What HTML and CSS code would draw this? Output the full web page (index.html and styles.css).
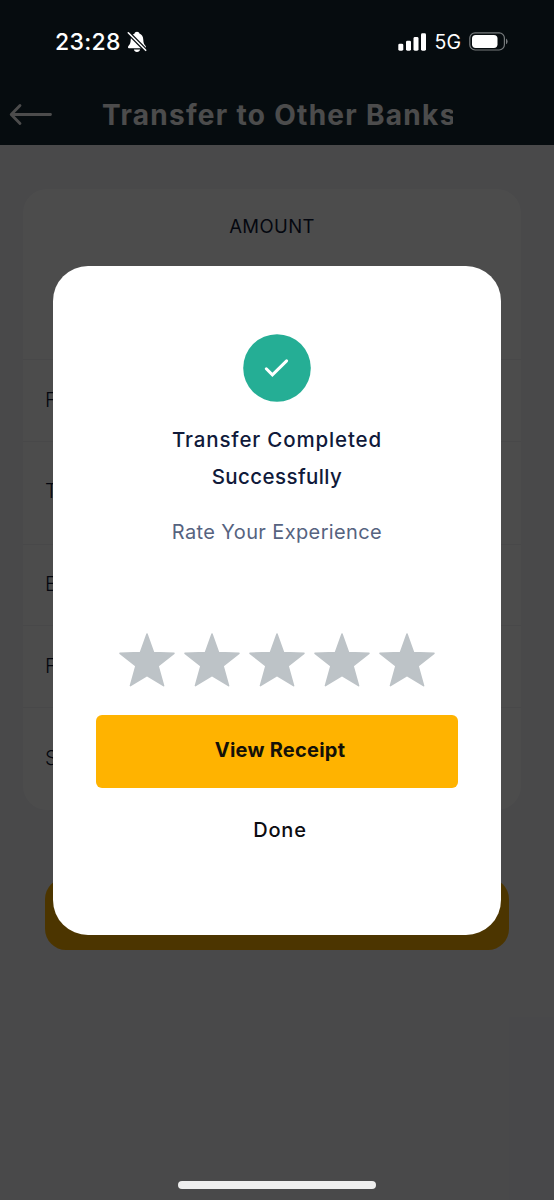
FILE: index.html
```html
<!DOCTYPE html>
<html lang="en">
<head>
<meta charset="utf-8">
<title>Transfer to Other Banks</title>
<link rel="stylesheet" href="styles.css">
</head>
<body>
<div class="screen">
  <header class="header">
    <svg class="back" width="44" height="24" viewBox="0 0 44 24"><path d="M11 2.500 2.200 11.500 11 20.500M2.500 11.500H41.500" fill="none" stroke="#fff" stroke-width="2.800" stroke-linecap="round" stroke-linejoin="round"/></svg>
    <h1 class="title">Transfer to Other Banks</h1>
  </header>
  <main class="content">
    <section class="card">
      <div class="amount">AMOUNT</div>
      <div class="row">F</div>
      <div class="row row-tall">T</div>
      <div class="row">B</div>
      <div class="row">F</div>
      <div class="row row-last">S</div>
    </section>
    <div class="continue"></div>
  </main>
</div>
<div class="overlay">
  <div class="status">
    <div class="status-left">
      <span class="time">23:28</span>
      <svg width="20" height="22" viewBox="0 0 20 22"><path d="M10 .8c1.400 0 2.200.8 2.400 1.800 2.500.9 3.800 3.200 3.900 6.200.1 3 .7 4.300 1.900 5.700.5.600.8 1 .8 1.700 0 .7-.5 1.100-1.300 1.100H2.300C1.500 17.300 1 16.900 1 16.200c0-.7.3-1.100.8-1.700C3 13.100 3.600 11.800 3.700 8.800c.1-3 1.400-5.300 3.900-6.200C7.800 1.600 8.600.8 10 .8ZM6.900 18.500h6.200c-.2 1.500-1.500 2.500-3.100 2.500s-2.900-1-3.100-2.500Z" fill="#fff"/><path d="M1 1.500 19 19.500" stroke="#070d10" stroke-width="4"/><path d="M1.300 1.800 18.700 19.300" stroke="#fff" stroke-width="1.600" stroke-linecap="round"/></svg>
    </div>
    <div class="status-right">
      <svg width="29" height="18" viewBox="0 0 29 18" fill="#fff"><rect x=".3" y="10.700" width="5" height="7" rx="1.400"/><rect x="8" y="7.700" width="5" height="10" rx="1.400"/><rect x="15.500" y="4" width="5" height="13.700" rx="1.400"/><rect x="23" y=".2" width="5" height="17.500" rx="1.400"/></svg>
      <span class="network">5G</span>
      <svg width="39" height="19" viewBox="0 0 39 19"><rect x=".8" y=".8" width="34.600" height="17.200" rx="5.300" fill="none" stroke="#777b7d" stroke-width="1.200"/><rect x="3" y="2.900" width="25.500" height="13" rx="3.700" fill="#fff"/><path d="M37 6.500q1.600 1 1.600 2.900T37 12.300Z" fill="#777b7d"/></svg>
    </div>
  </div>
  <section class="modal">
    <svg class="check" width="68" height="68" viewBox="0 0 68 68"><circle cx="34" cy="34" r="33.800" fill="#25ae95"/><path d="M23.300 34.800 29.400 40.900 43.600 26.900" fill="none" stroke="#fff" stroke-width="3" stroke-linecap="round" stroke-linejoin="miter"/></svg>
    <h2 class="done-title"><span class="line-a">Transfer Completed</span><br><span class="line-b">Successfully</span></h2>
    <p class="rate">Rate Your Experience</p>
    <div class="stars">
      <svg class="star" viewBox="0 0 56 54"><path d="M28 1 34.600 19.400 55 20.300 39.100 33 44.600 52.700 28 42.500 11.400 52.700 16.900 33 1 20.300 21.400 19.400Z"/></svg>
      <svg class="star" viewBox="0 0 56 54"><path d="M28 1 34.600 19.400 55 20.300 39.100 33 44.600 52.700 28 42.500 11.400 52.700 16.900 33 1 20.300 21.400 19.400Z"/></svg>
      <svg class="star" viewBox="0 0 56 54"><path d="M28 1 34.600 19.400 55 20.300 39.100 33 44.600 52.700 28 42.500 11.400 52.700 16.900 33 1 20.300 21.400 19.400Z"/></svg>
      <svg class="star" viewBox="0 0 56 54"><path d="M28 1 34.600 19.400 55 20.300 39.100 33 44.600 52.700 28 42.500 11.400 52.700 16.900 33 1 20.300 21.400 19.400Z"/></svg>
      <svg class="star" viewBox="0 0 56 54"><path d="M28 1 34.600 19.400 55 20.300 39.100 33 44.600 52.700 28 42.500 11.400 52.700 16.900 33 1 20.300 21.400 19.400Z"/></svg>
    </div>
    <button class="receipt"><span>View Receipt</span></button>
    <button class="done"><span>Done</span></button>
  </section>
  <div class="home"></div>
</div>
</body>
</html>
```
FILE: styles.css
```css
* { box-sizing: border-box; margin: 0; }
body { width: 554px; height: 1200px; overflow: hidden; background: #f3f3f8; font-family: Inter, "Liberation Sans", sans-serif; position: relative; }
.screen { height: 1200px; display: flex; flex-direction: column; background: #f3f3f8; }
.header { height: 145px; padding: 84px 0 0 9px; display: flex; align-items: center; gap: 49px; background: #172b35; }
.back { flex: none; }
.title { width: 351px; overflow: hidden; white-space: nowrap; color: #fff; font-size: 28px; line-height: 38px; font-weight: 700; letter-spacing: 1.300px; }
.content { padding: 44px 33px 0 23px; display: flex; flex-direction: column; }
.card { height: 621px; border-radius: 24px; background: #fff; color: #0f1a37; overflow: hidden; }
.amount { height: 171px; padding-top: 24px; line-height: 26px; font-size: 18.500px; text-align: center; border-bottom: 1px solid #f0f0f3; letter-spacing: .4px; }
.row { height: 81.500px; padding: 0 0 1px 22px; display: flex; align-items: center; font-size: 20px; font-weight: 300; border-bottom: 1px solid #f0f0f3; }
.row-tall { height: 103px; padding-bottom: 3px; }
.row-last { height: 102px; padding-bottom: 2px; border-bottom: 0; }
.continue { height: 72px; margin: 68px -21px 0 22px; width: 464px; border-radius: 21px; background: #ffb300; }
.overlay { position: absolute; inset: 0; background: rgba(0, 0, 0, .7); display: flex; flex-direction: column; align-items: center; }
.status { width: 100%; height: 266px; padding: 30px 46px 0 55px; display: flex; justify-content: space-between; align-items: flex-start; color: #fff; }
.status-left, .status-right { height: 23px; display: flex; align-items: center; }
.status-left { gap: 6px; }
.status-right { gap: 8px; }
.time { font-size: 23px; font-weight: 500; line-height: 25px; padding-top: 1px; letter-spacing: .3px; }
.network { font-size: 19.500px; line-height: 20px; }
.modal { width: 448px; height: 669px; padding: 68px 43px 0; border-radius: 35px; background: #fff; display: flex; flex-direction: column; align-items: center; }
.check { flex: none; }
.done-title { margin-top: 19px; text-align: center; color: #101a3a; font-size: 20.500px; line-height: 37px; font-weight: 500; }
.line-a { letter-spacing: .85px; }
.line-b { letter-spacing: .4px; }
.rate { margin-top: 22px; color: #56637f; font-size: 20px; line-height: 30px; letter-spacing: .38px; }
.stars { margin-top: 86px; display: flex; gap: 8.800px; }
.star { width: 56px; height: 54px; fill: #bdc3c7; stroke: #bdc3c7; stroke-width: 1.500px; stroke-linejoin: round; }
.receipt, .done { border: 0; font-family: inherit; padding: 0; }
.receipt { margin-top: 28px; width: 362px; height: 73px; flex: none; padding: 0 0 3px 6px; border-radius: 6px; background: #ffb300; color: #141108; font-size: 20px; font-weight: 700; letter-spacing: .25px; }
.done { margin-top: 25px; height: 34px; padding: 0 0 0 6px; background: none; color: #0c0c10; font-size: 20px; font-weight: 500; letter-spacing: .8px; }
.home { margin-top: 246px; width: 198px; height: 8px; border-radius: 4px; background: #eee; }
```
